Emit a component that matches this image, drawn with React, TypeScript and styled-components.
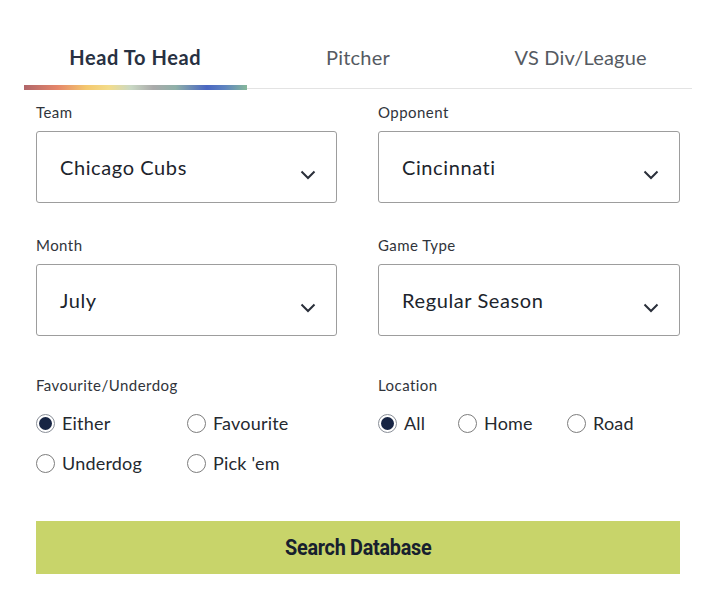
import React, { useState } from "react";
import styled, { createGlobalStyle } from "styled-components";

const Global = createGlobalStyle`
  html, body { margin: 0; padding: 0; background: #ffffff; }
  body { font-family: "Lato", "Open Sans", sans-serif; color: #1f2430; }
  * { box-sizing: border-box; }
`;

const Page = styled.div`
  width: 717px;
  height: 600px;
  padding: 34px 25px 0 24px;
`;

const Tabs = styled.div`
  display: grid;
  grid-template-columns: repeat(3, 1fr);
  border-bottom: 1.5px solid #e3e3e3;
  width: 668px;
`;

const Tab = styled.div<{ $active?: boolean }>`
  position: relative;
  height: 54px;
  display: flex;
  justify-content: center;
  padding-top: 11px;
  font-size: 20px;
  font-weight: ${(p) => (p.$active ? 700 : 400)};
  color: ${(p) => (p.$active ? "#283142" : "#555a62")};
  letter-spacing: ${(p) => (p.$active ? "0.6px" : "0.2px")};
  &::after {
    content: "";
    display: ${(p) => (p.$active ? "block" : "none")};
    position: absolute;
    left: 0;
    right: 0;
    bottom: -1.5px;
    height: 5px;
    background: linear-gradient(
      90deg,
      #b0666a 0%,
      #e5866a 15%,
      #f4c86e 28%,
      #f3dc8a 38%,
      #c9d8c4 48%,
      #aaaaaa 58%,
      #8fb0a8 68%,
      #4a66c2 82%,
      #5e84c0 90%,
      #86b89a 100%
    );
  }
`;

const Form = styled.div`
  padding: 14px 12px 0 12px;
`;

const Grid = styled.div`
  display: grid;
  grid-template-columns: 301px 302px;
  column-gap: 41px;
`;

const Field = styled.div<{ $mb?: number }>`
  display: flex;
  flex-direction: column;
  margin-bottom: ${(p) => p.$mb ?? 0}px;
`;

const Label = styled.div`
  font-size: 15px;
  letter-spacing: 0.45px;
  color: #30343b;
  height: 19px;
  margin-bottom: 9px;
`;

const Select = styled.div`
  height: 72px;
  border: 1px solid #9d9d9d;
  border-radius: 3px;
  display: flex;
  align-items: center;
  justify-content: space-between;
  padding: 0 20px 0 23px;
  font-size: 20px;
  letter-spacing: 0.6px;
  color: #20242c;
`;

const Chevron = styled.svg`
  width: 16px;
  height: 10px;
  margin-top: 16px;
`;

const RadioGroup = styled.div<{ $cols: string }>`
  display: grid;
  grid-template-columns: ${(p) => p.$cols};
  row-gap: 20px;
  margin-top: 9px;
`;

const RadioItem = styled.label`
  display: flex;
  align-items: center;
  gap: 7px;
  font-size: 18px;
  letter-spacing: 0.2px;
  color: #25292f;
  height: 20px;
  cursor: pointer;
`;

const RadioCircle = styled.span<{ $on?: boolean }>`
  width: 19px;
  height: 19px;
  border-radius: 50%;
  border: 1px solid ${(p) => (p.$on ? "#8a8f98" : "#7d7d7d")};
  display: flex;
  align-items: center;
  justify-content: center;
  flex-shrink: 0;
  &::after {
    content: "";
    display: ${(p) => (p.$on ? "block" : "none")};
    width: 13px;
    height: 13px;
    border-radius: 50%;
    background: #172544;
  }
`;

const Button = styled.button`
  margin-top: 48px;
  width: 644px;
  height: 53px;
  border: none;
  background: #c8d46a;
  color: #17202e;
  font-family: "Roboto", "Liberation Sans", sans-serif;
  font-weight: 700;
  font-size: 22px;
  letter-spacing: -0.3px;
  display: flex;
  align-items: center;
  justify-content: center;
`;

const ButtonText = styled.span`
  display: inline-block;
  transform: scaleX(0.9);
`;

const ChevronIcon = () => (
  <Chevron viewBox="0 0 16 10">
    <path d="M1.5 1.5 L8 8 L14.5 1.5" fill="none" stroke="#2a2f3a" strokeWidth="2" />
  </Chevron>
);

const Radio = ({ label, on }: { label: string; on?: boolean }) => (
  <RadioItem>
    <RadioCircle $on={on} />
    {label}
  </RadioItem>
);

export default function App() {
  const [tab] = useState(0);
  return (
    <Page>
      <Global />
      <Tabs>
        {["Head To Head", "Pitcher", "VS Div/League"].map((t, i) => (
          <Tab key={t} $active={i === tab}>
            {t}
          </Tab>
        ))}
      </Tabs>
      <Form>
        <Grid>
          <Field $mb={33}>
            <Label>Team</Label>
            <Select>
              Chicago Cubs
              <ChevronIcon />
            </Select>
          </Field>
          <Field $mb={33}>
            <Label>Opponent</Label>
            <Select>
              Cincinnati
              <ChevronIcon />
            </Select>
          </Field>
          <Field $mb={40}>
            <Label>Month</Label>
            <Select>
              July
              <ChevronIcon />
            </Select>
          </Field>
          <Field $mb={40}>
            <Label>Game Type</Label>
            <Select>
              Regular Season
              <ChevronIcon />
            </Select>
          </Field>
          <Field>
            <Label>Favourite/Underdog</Label>
            <RadioGroup $cols="151px 150px">
              <Radio label="Either" on />
              <Radio label="Favourite" />
              <Radio label="Underdog" />
              <Radio label="Pick 'em" />
            </RadioGroup>
          </Field>
          <Field>
            <Label>Location</Label>
            <RadioGroup $cols="80px 109px 100px">
              <Radio label="All" on />
              <Radio label="Home" />
              <Radio label="Road" />
            </RadioGroup>
          </Field>
        </Grid>
        <Button>
          <ButtonText>Search Database</ButtonText>
        </Button>
      </Form>
    </Page>
  );
}
